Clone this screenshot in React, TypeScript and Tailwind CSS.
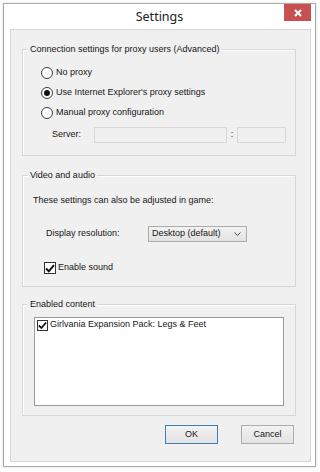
import React from "react";

function Radio({ checked, label }: { checked?: boolean; label: string }) {
  return (
    <div className="flex items-center h-[20px] pl-[18px]">
      <span className="flex items-center justify-center w-[12px] h-[12px] rounded-full border border-[#3c3c3c] bg-white">
        {checked && <span className="w-[6px] h-[6px] rounded-full bg-[#111]" />}
      </span>
      <span className="ml-[3px]">{label}</span>
    </div>
  );
}

function Check({ size = 12 }: { size?: number }) {
  return (
    <span
      className="flex items-center justify-center border border-[#333] bg-white shrink-0"
      style={{ width: size, height: size }}
    >
      <svg width="10" height="9" viewBox="0 0 10 9">
        <path d="M1 4.5 L3.8 7.3 L9 1.2" fill="none" stroke="#111" strokeWidth="2" />
      </svg>
    </span>
  );
}

function GroupBox({ title, className, children }: { title: string; className: string; children: React.ReactNode }) {
  return (
    <div className={`relative border border-[#d6d6d6] shadow-[inset_1px_1px_0_#fff] ${className}`}>
      <span className="absolute -top-[7px] left-[5px] bg-[#f0f0f0] px-[2px] leading-[12px]">{title}</span>
      {children}
    </div>
  );
}

export default function App() {
  return (
    <div className="w-[320px] h-[472px] bg-white pl-[3px] pt-[3px] font-['Liberation_Sans',Arial,sans-serif] text-[9px] text-[#161616]">
      <div className="w-[313px] h-[464px] border border-[#a9a9a9] bg-white shadow-[0_0_3px_rgba(0,0,0,0.15)] flex flex-col">
        {/* title bar */}
        <div className="relative h-[25px] flex items-start justify-center">
          <span className="mt-[4px] font-['Noto_Sans',sans-serif] text-[12.5px] leading-[18px] text-[#222]">Settings</span>
          <div className="absolute right-[4px] top-0 w-[27px] h-[17px] bg-[#c75050] flex items-center justify-center">
            <svg width="8" height="8" viewBox="0 0 8 8">
              <path d="M1 1 L7 7 M7 1 L1 7" stroke="#fff" strokeWidth="2" />
            </svg>
          </div>
        </div>

        {/* client area */}
        <div className="ml-[6px] w-[301px] h-[433px] bg-[#f0f0f0] border border-[#d6d6d6] pl-[11px] flex flex-col">
          <GroupBox title="Connection settings for proxy users (Advanced)" className="mt-[19px] w-[274px] h-[107px]">
            <div className="pt-[13px] flex flex-col">
              <Radio label="No proxy" />
              <Radio checked label="Use Internet Explorer's proxy settings" />
              <Radio label="Manual proxy configuration" />
              <div className="mt-[2px] h-[20px] flex items-center pl-[29px]">
                <span className="w-[42px]">Server:</span>
                <span className="w-[133px] h-[16px] border border-[#d9d9d9] bg-[#f0f0f0]" />
                <span className="w-[10px] text-center">:</span>
                <span className="w-[49px] h-[16px] border border-[#d9d9d9] bg-[#f0f0f0]" />
              </div>
            </div>
          </GroupBox>

          <GroupBox title="Video and audio" className="mt-[19px] w-[274px] h-[112px]">
            <div className="pt-[17px] pl-[10px] leading-[14px]">These settings can also be adjusted in game:</div>
            <div className="mt-[19px] pl-[23px] flex items-center h-[16px]">
              <span className="w-[102px]">Display resolution:</span>
              <div className="w-[99px] h-[16px] border border-[#acacac] bg-gradient-to-b from-[#f2f2f2] to-[#e2e2e2] flex items-center justify-between pl-[3px] pr-[5px]">
                <span>Desktop (default)</span>
                <svg width="7" height="4" viewBox="0 0 7 4">
                  <path d="M0.5 0.5 L3.5 3.5 L6.5 0.5" fill="none" stroke="#444" strokeWidth="1" />
                </svg>
              </div>
            </div>
            <div className="mt-[20px] pl-[21px] flex items-center h-[12px]">
              <Check />
              <span className="ml-[2px]">Enable sound</span>
            </div>
          </GroupBox>

          <GroupBox title="Enabled content" className="mt-[17px] w-[274px] h-[112px]">
            <div className="mt-[12px] ml-[11px] w-[250px] h-[89px] border border-[#9a9a9a] bg-white pl-[2px] pt-[1px]">
              <div className="flex items-center h-[12px]">
                <Check size={11} />
                <span className="ml-[2px]">Girlvania Expansion Pack: Legs &amp; Feet</span>
              </div>
            </div>
          </GroupBox>

          <div className="mt-[9px] w-[272px] flex justify-end gap-[23px]">
            <button className="w-[53px] h-[19px] border border-[#3c7fb1] bg-gradient-to-b from-[#f2f2f2] to-[#e3e3e3] text-[9px]">OK</button>
            <button className="w-[53px] h-[19px] border border-[#acacac] bg-gradient-to-b from-[#f2f2f2] to-[#e3e3e3] text-[9px]">Cancel</button>
          </div>
        </div>
      </div>
    </div>
  );
}
